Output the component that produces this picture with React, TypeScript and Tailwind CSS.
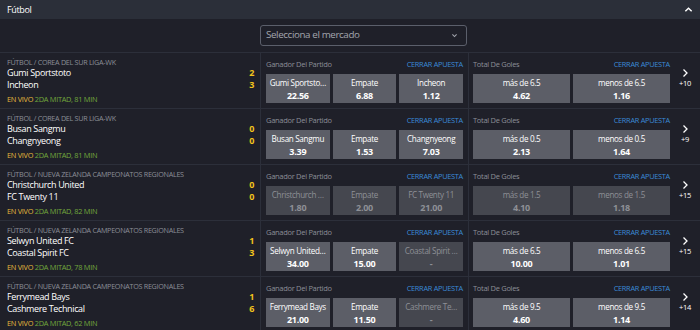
import React from "react";

type Odd = { label: string; value: string; off?: boolean };

type Match = {
  league: string;
  home: string;
  away: string;
  homeScore: string;
  awayScore: string;
  time: string;
  winner: Odd[];
  goals: Odd[];
  more: string;
};

const COREA = "FÚTBOL / COREA DEL SUR LIGA-WK";
const NZ = "FÚTBOL / NUEVA ZELANDA CAMPEONATOS REGIONALES";

const matches: Match[] = [
  {
    league: COREA,
    home: "Gumi Sportstoto",
    away: "Incheon",
    homeScore: "2",
    awayScore: "3",
    time: "2DA MITAD, 81 MIN",
    winner: [
      { label: "Gumi Sportsto…", value: "22.56" },
      { label: "Empate", value: "6.88" },
      { label: "Incheon", value: "1.12" },
    ],
    goals: [
      { label: "más de 6.5", value: "4.62" },
      { label: "menos de 6.5", value: "1.16" },
    ],
    more: "+10",
  },
  {
    league: COREA,
    home: "Busan Sangmu",
    away: "Changnyeong",
    homeScore: "0",
    awayScore: "0",
    time: "2DA MITAD, 81 MIN",
    winner: [
      { label: "Busan Sangmu", value: "3.39" },
      { label: "Empate", value: "1.53" },
      { label: "Changnyeong", value: "7.03" },
    ],
    goals: [
      { label: "más de 0.5", value: "2.13" },
      { label: "menos de 0.5", value: "1.64" },
    ],
    more: "+9",
  },
  {
    league: NZ,
    home: "Christchurch United",
    away: "FC Twenty 11",
    homeScore: "0",
    awayScore: "0",
    time: "2DA MITAD, 82 MIN",
    winner: [
      { label: "Christchurch …", value: "1.80", off: true },
      { label: "Empate", value: "2.00", off: true },
      { label: "FC Twenty 11", value: "21.00", off: true },
    ],
    goals: [
      { label: "más de 1.5", value: "4.10", off: true },
      { label: "menos de 1.5", value: "1.18", off: true },
    ],
    more: "+15",
  },
  {
    league: NZ,
    home: "Selwyn United FC",
    away: "Coastal Spirit FC",
    homeScore: "1",
    awayScore: "3",
    time: "2DA MITAD, 78 MIN",
    winner: [
      { label: "Selwyn United…", value: "34.00" },
      { label: "Empate", value: "15.00" },
      { label: "Coastal Spirit …", value: "-", off: true },
    ],
    goals: [
      { label: "más de 6.5", value: "10.00" },
      { label: "menos de 6.5", value: "1.01" },
    ],
    more: "+15",
  },
  {
    league: NZ,
    home: "Ferrymead Bays",
    away: "Cashmere Technical",
    homeScore: "1",
    awayScore: "6",
    time: "2DA MITAD, 62 MIN",
    winner: [
      { label: "Ferrymead Bays", value: "21.00" },
      { label: "Empate", value: "11.50" },
      { label: "Cashmere Te…", value: "-", off: true },
    ],
    goals: [
      { label: "más de 9.5", value: "4.60" },
      { label: "menos de 9.5", value: "1.14" },
    ],
    more: "+14",
  },
];

const OddButton = ({ odd }: { odd: Odd }) => (
  <div
    className={
      odd.off
        ? "flex h-[29px] flex-col items-center justify-center bg-[#45474f] text-[#8e9096]"
        : "flex h-[29px] flex-col items-center justify-center bg-[#5c5e67] text-white"
    }
  >
    <span className="max-w-full truncate px-[2px] text-[8.1px] leading-[13px] tracking-[-0.04em]">{odd.label}</span>
    <span className="text-[9px] font-bold leading-[13px] tracking-[-0.03em]">{odd.value}</span>
  </div>
);

const MarketHead = ({ title }: { title: string }) => (
  <div className="flex h-[17px] items-center justify-between pb-[2px]">
    <span className="text-[7.5px] tracking-[-0.04em] text-[#8b8e97]">{title}</span>
    <span className="text-[7.4px] tracking-[-0.04em] text-[#3b8ad6]">CERRAR APUESTA</span>
  </div>
);

const Row = ({ m }: { m: Match }) => (
  <div className="flex h-[56px] border-t border-[#2c2f3a]">
    <div className="flex w-[260px] flex-col pl-[7px] pr-[6px] pt-[4px]">
      <div className="text-[7.2px] leading-[10px] tracking-[-0.04em] text-[#8b8e97]">{m.league}</div>
      <div className="flex justify-between text-[9px] leading-[12px] tracking-[-0.04em] text-white">
        <span>{m.home}</span>
        <span className="text-[9px] font-bold text-[#f2c31c]">{m.homeScore}</span>
      </div>
      <div className="flex justify-between text-[9px] leading-[12px] tracking-[-0.04em] text-white">
        <span>{m.away}</span>
        <span className="text-[9px] font-bold text-[#f2c31c]">{m.awayScore}</span>
      </div>
      <div className="mt-[3px] text-[7.4px] leading-[10px] tracking-[-0.04em]">
        <span className="text-[#e3b93c]">EN VIVO </span>
        <span className="text-[#72a83c]">{m.time}</span>
      </div>
    </div>
    <div className="w-[208px] border-l border-[#2c2f3a] px-[5px] pt-[4px]">
      <MarketHead title="Ganador Del Partido" />
      <div className="grid grid-cols-3 gap-[3px]">
        {m.winner.map((o, i) => (
          <OddButton key={i} odd={o} />
        ))}
      </div>
    </div>
    <div className="w-[202px] border-l border-[#2c2f3a] pl-[4px] pt-[4px]">
      <MarketHead title="Total De Goles" />
      <div className="grid grid-cols-2 gap-[3px]">
        {m.goals.map((o, i) => (
          <OddButton key={i} odd={o} />
        ))}
      </div>
    </div>
    <div className="flex w-[30px] flex-col items-center justify-center pb-[4px] text-white">
      <svg viewBox="0 0 10 10" className="h-[10px] w-[10px]" fill="none" stroke="white" strokeWidth="1.3">
        <path d="M3.5 1.5 7 5 3.5 8.5" />
      </svg>
      <span className="text-[7.5px] leading-[11px] tracking-[-0.04em]">{m.more}</span>
    </div>
  </div>
);

export default function App() {
  return (
    <div
      className="h-[330px] w-[700px] overflow-hidden bg-[#1f2029]"
      style={{ fontFamily: '"Open Sans", "Noto Sans", sans-serif' }}
    >
      <div className="flex h-[19px] items-center justify-between bg-[#2b2f39] pl-[7px] pr-[7px]">
        <span className="text-[9px] font-medium tracking-[-0.04em] text-white">Fútbol</span>
        <svg viewBox="0 0 10 10" className="h-[9px] w-[9px]" fill="none" stroke="white" strokeWidth="1.6">
          <path d="M1.5 7 5 3.5 8.5 7" />
        </svg>
      </div>
      <div className="flex h-[33px] items-center pl-[260px]">
        <div className="flex h-[21px] w-[207px] items-center justify-between rounded-[3px] border border-[#5b5f6b] pl-[5px] pr-[8px]">
          <span className="text-[9.8px] tracking-[-0.04em] text-[#a3a6ae]">Selecciona el mercado</span>
          <svg viewBox="0 0 10 10" className="h-[7px] w-[7px]" fill="none" stroke="#a3a6ae" strokeWidth="1.5">
            <path d="M2 3.5 5 6.5 8 3.5" />
          </svg>
        </div>
      </div>
      {matches.map((m, i) => (
        <Row key={i} m={m} />
      ))}
    </div>
  );
}
